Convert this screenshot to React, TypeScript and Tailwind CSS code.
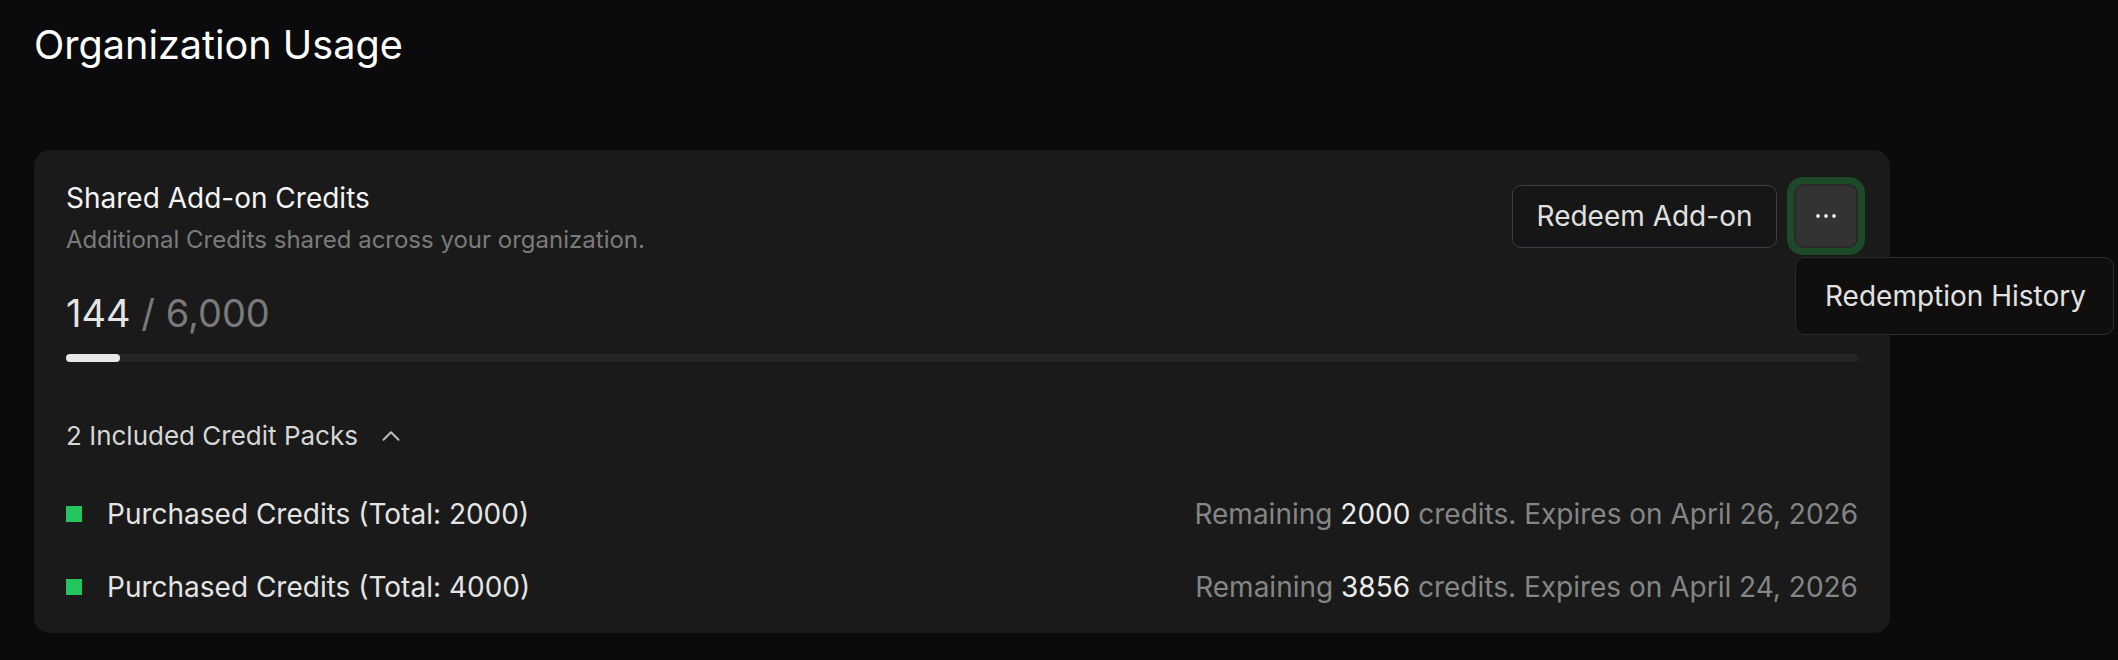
import { ChevronUp } from 'lucide-react';

const usage = { used: 144, total: 6000 };

const packs = [
  { total: 2000, remaining: 2000, expires: 'April 26, 2026' },
  { total: 4000, remaining: 3856, expires: 'April 24, 2026' },
];

function Dots() {
  return (
    <svg width="22" height="6" viewBox="0 0 22 6" fill="currentColor">
      <circle cx="3" cy="3" r="1.9" />
      <circle cx="11" cy="3" r="1.9" />
      <circle cx="19" cy="3" r="1.9" />
    </svg>
  );
}

export default function App() {
  const pct = Math.max((usage.used / usage.total) * 100, 3);

  return (
    <div
      className="min-h-screen bg-[#0b0b0d] px-[34px] pt-[21px] text-white"
      style={{ fontFamily: 'Inter, "Noto Sans", sans-serif' }}
    >
      <h1 className="text-[39.6px] leading-[48px] font-normal text-white">Organization Usage</h1>

      <div className="mt-[81px] w-[1856px] rounded-[16px] bg-[#1a1a1a] pt-[30px] pb-[28px] pl-[32px] pr-[32px]">
        {/* header */}
        <div className="flex items-start justify-between">
          <div>
            <h2 className="text-[28px] leading-[36px] font-normal text-[#f5f5f5]">Shared Add-on Credits</h2>
            <p className="mt-[8px] text-[24px] leading-[32px] text-[#7b7b7b]">
              Additional Credits shared across your organization.
            </p>
          </div>
          <div className="mt-[4px] flex items-center gap-[17px]">
            <button className="h-[63px] w-[265px] rounded-[9px] border border-[#3b3e44] bg-[#161616] text-[28px] text-[#e0e0e0]">
              Redeem Add-on
            </button>
            <div className="relative">
              <button className="flex h-[64px] w-[64px] items-center justify-center rounded-[9px] border-2 border-[#2a2a2a] bg-[#333333] text-[#e8e8e8] shadow-[0_0_0_7px_#1d4a28]">
                <Dots />
              </button>
              <div className="absolute top-[73px] left-[1px] z-10 flex h-[78px] w-[319px] items-center rounded-[10px] border border-[#2b2a29] bg-[#100f0e] pl-[29px]">
                <span className="text-[28px] text-[#e2e2e2]">Redemption History</span>
              </div>
            </div>
          </div>
        </div>

        {/* usage */}
        <div className="mt-[33px] text-[38px] leading-[48px]">
          <span className="text-[#e4e4e4]">{usage.used}</span>
          <span className="text-[#7a7a7a]"> / {usage.total.toLocaleString('en-US')}</span>
        </div>
        <div className="mt-[17px] h-[8px] w-full rounded-full bg-[#262625]">
          <div className="h-full rounded-full bg-[#e8e8e8]" style={{ width: `${pct}%` }} />
        </div>

        {/* packs */}
        <div className="mt-[58px] flex items-center text-[26px] leading-[32px] text-[#d6d6d6]">
          <span>{packs.length} Included Credit Packs</span>
          <ChevronUp size={30} strokeWidth={1.6} className="ml-[18px] text-[#bdbdbd]" />
        </div>

        <div className="mt-[44px] flex flex-col gap-[37px]">
          {packs.map((p) => (
            <div key={p.total} className="flex items-center justify-between text-[28px] leading-[36px]">
              <div className="flex items-center">
                <span className="h-[16px] w-[16px] bg-[#22c55e]" />
                <span className="ml-[25px] text-[#e4e4e4]">Purchased Credits (Total: {p.total})</span>
              </div>
              <div className="text-[#858585]">
                Remaining <span className="text-[#ececec]">{p.remaining}</span> credits. Expires on {p.expires}
              </div>
            </div>
          ))}
        </div>
      </div>
    </div>
  );
}
